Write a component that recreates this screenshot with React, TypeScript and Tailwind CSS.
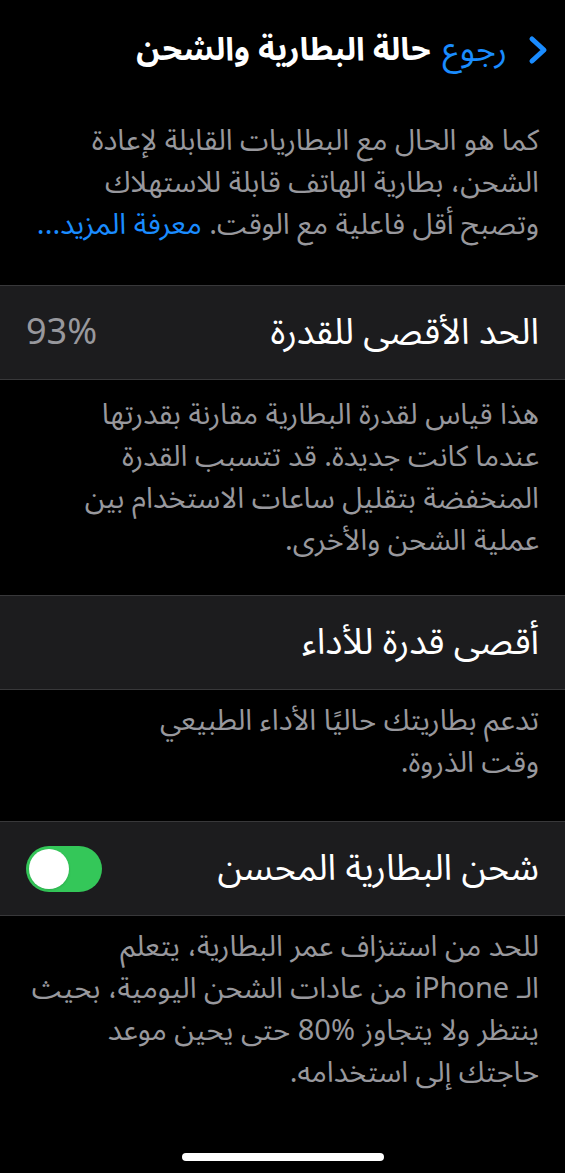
const font = { fontFamily: '"Noto Sans Arabic", "Noto Sans", "DejaVu Sans", sans-serif' };

function Row({ title, children }: { title: string; children?: React.ReactNode }) {
  return (
    <div className="flex h-[95px] items-center justify-between border-y border-[#38383a] bg-[#1c1c1e] px-[26px]">
      <span className="text-[36px] leading-none text-white">{title}</span>
      {children}
    </div>
  );
}

function Note({ lines, className = "" }: { lines: React.ReactNode[]; className?: string }) {
  return (
    <div className={`px-[26px] text-[29px] leading-[42px] text-[#98989d] ${className}`}>
      {lines.map((l, i) => (
        <div key={i} className="whitespace-nowrap">{l}</div>
      ))}
    </div>
  );
}

export default function App() {
  return (
    <div dir="rtl" style={font} className="flex min-h-[1173px] w-full flex-col bg-black">
      <header className="flex h-[100px] items-center pr-[14px]">
        <svg width="26" height="30" viewBox="0 0 26 30" className="shrink-0">
          <polyline points="7,4 19,15 7,26" fill="none" stroke="#1a8cff" strokeWidth="5" strokeLinecap="round" strokeLinejoin="round" />
        </svg>
        <span className="mr-[18px] text-[34px] leading-none text-[#1a8cff]">رجوع</span>
        <h1 className="mr-[12px] text-[32px] font-bold leading-none text-white">حالة البطارية والشحن</h1>
      </header>

      <Note
        className="pt-[20px] pb-[39px]"
        lines={[
          "كما هو الحال مع البطاريات القابلة لإعادة",
          "الشحن، بطارية الهاتف قابلة للاستهلاك",
          <>
            وتصبح أقل فاعلية مع الوقت. <span className="text-[#1a8cff]">معرفة المزيد...</span>
          </>,
        ]}
      />

      <Row title="الحد الأقصى للقدرة">
        <span className="text-[36px] leading-none text-[#98989d]" dir="ltr">93%</span>
      </Row>

      <Note
        className="pt-[14px] pb-[33px]"
        lines={[
          "هذا قياس لقدرة البطارية مقارنة بقدرتها",
          "عندما كانت جديدة. قد تتسبب القدرة",
          "المنخفضة بتقليل ساعات الاستخدام بين",
          "عملية الشحن والأخرى.",
        ]}
      />

      <Row title="أقصى قدرة للأداء" />

      <Note
        className="pt-[10px] pb-[37px]"
        lines={["تدعم بطاريتك حاليًا الأداء الطبيعي", "وقت الذروة."]}
      />

      <Row title="شحن البطارية المحسن">
        <div className="flex h-[46px] w-[76px] items-center justify-end rounded-full bg-[#34c759] p-[3px]">
          <div className="h-[40px] w-[40px] rounded-full bg-white shadow" />
        </div>
      </Row>

      <Note
        className="pt-[10px]"
        lines={[
          "للحد من استنزاف عمر البطارية، يتعلم",
          "الـ iPhone من عادات الشحن اليومية، بحيث",
          "ينتظر ولا يتجاوز %80 حتى يحين موعد",
          "حاجتك إلى استخدامه.",
        ]}
      />

      <div className="mt-auto mb-[12px] flex justify-center">
        <div className="h-[8px] w-[202px] rounded-full bg-white" />
      </div>
    </div>
  );
}
